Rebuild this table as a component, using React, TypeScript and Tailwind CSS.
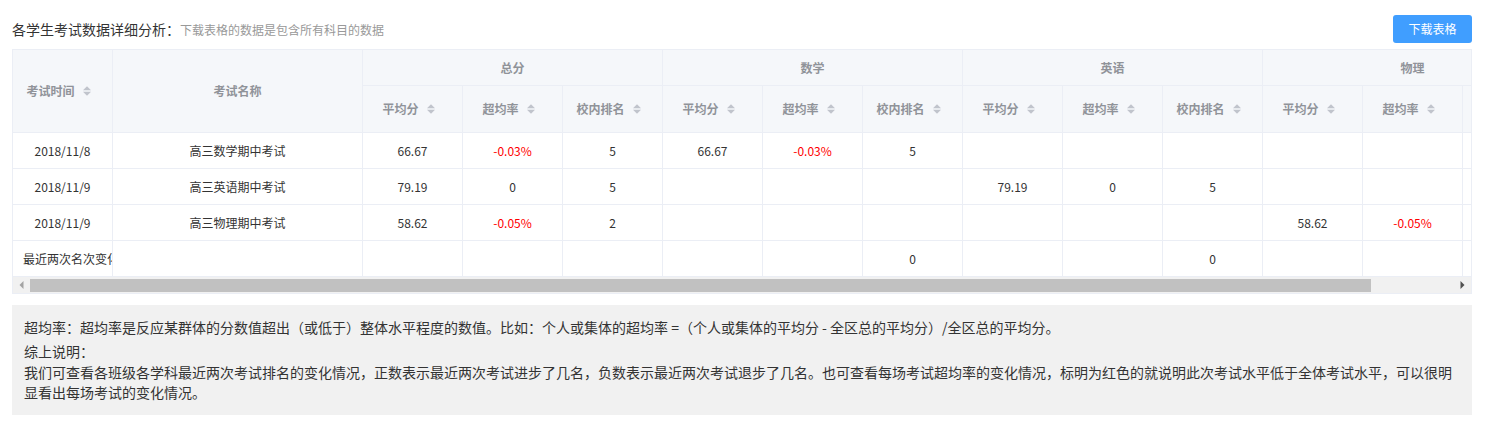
import React from "react";

const FONT = { fontFamily: '"Noto Sans CJK SC", "Liberation Sans", sans-serif' };

function SortIcon() {
  return (
    <span className="inline-flex w-[24px] justify-center items-center">
      <svg width="10" height="10" viewBox="0 0 10 10">
        <path d="M1 4.3 L5 0.3 L9 4.3 Z" fill="#c0c4cc" />
        <path d="M1 5.7 L5 9.7 L9 5.7 Z" fill="#c0c4cc" />
      </svg>
    </span>
  );
}

type Cell = string | { v: string; red?: boolean };

const rows: Cell[][] = [
  ["66.67", { v: "-0.03%", red: true }, "5", "66.67", { v: "-0.03%", red: true }, "5", "", "", "", "", "", ""],
  ["79.19", "0", "5", "", "", "", "79.19", "0", "5", "", "", ""],
  ["58.62", { v: "-0.05%", red: true }, "2", "", "", "", "", "", "", "58.62", { v: "-0.05%", red: true }, "2"],
  ["", "", "", "", "", "0", "", "", "0", "", "", "0"],
];
const first = [
  ["2018/11/8", "高三数学期中考试"],
  ["2018/11/9", "高三英语期中考试"],
  ["2018/11/9", "高三物理期中考试"],
];

const subjects = ["总分", "数学", "英语", "物理"];
const subCols = ["平均分", "超均率", "校内排名"];

export default function App() {
  const cellB = "border-r border-b border-[#ebeef5]";
  return (
    <div className="w-[1488px] h-[423px] bg-white px-3 pt-[15px]" style={FONT}>
      <div className="w-[1460px] flex items-center justify-between h-[28px]">
        <div className="flex items-baseline">
          <span className="text-[14px] text-[#333]">各学生考试数据详细分析：</span>
          <span className="text-[12px] text-[#999]">下载表格的数据是包含所有科目的数据</span>
        </div>
        <button className="w-[79px] h-[28px] rounded-[3px] bg-[#409eff] text-white text-[12px]">下载表格</button>
      </div>

      <div className="mt-[6px] w-[1460px] border-l border-r border-t border-b border-[#ebeef5] overflow-hidden">
        <div className="grid w-[1550px] grid-cols-[100px_250px_repeat(12,100px)] grid-rows-[36px_47px_repeat(4,36px)] text-[12px]">
          <div className={`${cellB} row-span-2 bg-[#f5f7fa] flex items-center justify-center font-bold text-[#909399]`}>
            考试时间<SortIcon />
          </div>
          <div className={`${cellB} row-span-2 bg-[#f5f7fa] flex items-center justify-center font-bold text-[#909399]`}>
            考试名称
          </div>
          {subjects.map((s) => (
            <div key={s} className={`${cellB} col-span-3 bg-[#f5f7fa] flex items-center justify-center font-bold text-[#909399]`}>
              {s}
            </div>
          ))}
          {subjects.map((s) =>
            subCols.map((c) => (
              <div key={s + c} className={`${cellB} bg-[#f5f7fa] flex items-center justify-center font-bold text-[#909399]`}>
                {c}<SortIcon />
              </div>
            ))
          )}
          {rows.map((r, i) => (
            <React.Fragment key={i}>
              {i < 3 ? (
                <>
                  <div className={`${cellB} flex items-center justify-center text-[#333]`}>{first[i][0]}</div>
                  <div className={`${cellB} flex items-center justify-center text-[#333]`}>{first[i][1]}</div>
                </>
              ) : (
                <>
                  <div className={`${cellB} flex items-center pl-[10px] overflow-hidden whitespace-nowrap text-[#333]`}>最近两次名次变化</div>
                  <div className={`${cellB}`}></div>
                </>
              )}
              {r.map((c, j) => {
                const v = typeof c === "string" ? c : c.v;
                const red = typeof c !== "string" && c.red;
                return (
                  <div key={j} className={`${cellB} flex items-center justify-center ${red ? "text-[#ff0000]" : "text-[#333]"}`}>
                    {v}
                  </div>
                );
              })}
            </React.Fragment>
          ))}
        </div>
        <div className="flex h-[16px] bg-[#f1f1f1] items-center">
          <div className="w-[17px] flex justify-center items-center">
            <svg width="5" height="8" viewBox="0 0 5 8"><path d="M4.5 0 L0.5 4 L4.5 8 Z" fill="#a3a3a3" /></svg>
          </div>
          <div className="flex-1 h-full flex items-center">
            <div className="w-[1341px] h-[13px] bg-[#c1c1c1]"></div>
          </div>
          <div className="w-[17px] flex justify-center items-center">
            <svg width="5" height="8" viewBox="0 0 5 8"><path d="M0.5 0 L4.5 4 L0.5 8 Z" fill="#505050" /></svg>
          </div>
        </div>
      </div>

      <div className="mt-[11px] w-[1460px] bg-[#f1f1f1] pl-[12px] pr-[12px] pt-[12px] pb-[13px] text-[14px] leading-[20px] text-[#333]">
        <p className="mb-[4px]">超均率：超均率是反应某群体的分数值超出（或低于）整体水平程度的数值。比如：个人或集体的超均率 =（个人或集体的平均分 - 全区总的平均分）/全区总的平均分。</p>
        <p className="mb-[1px]">综上说明：</p>
        <p>我们可查看各班级各学科最近两次考试排名的变化情况，正数表示最近两次考试进步了几名，负数表示最近两次考试退步了几名。也可查看每场考试超均率的变化情况，标明为红色的就说明此次考试水平低于全体考试水平，可以很明显看出每场考试的变化情况。</p>
      </div>
    </div>
  );
}
